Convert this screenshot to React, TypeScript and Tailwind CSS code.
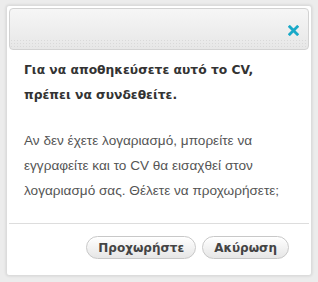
export default function App() {
  return (
    <div className="w-[318px] h-[282px] bg-[#ececec] pt-[5px] pl-[6px] font-['Liberation_Sans',Arial,sans-serif]">
      {/* Dialog */}
      <div className="w-[306px] h-[271px] bg-white border border-[#dcdcdc] rounded-[3px] shadow-[0_0_3px_rgba(0,0,0,0.12)] p-[2px] flex flex-col">
        {/* Header */}
        <div className="relative h-[42px] rounded-[4px] border border-[#d2d2d2] bg-gradient-to-b from-[#f6f6f6] to-[#e7e7e7] overflow-hidden">
          <div className="absolute left-0 right-0 bottom-0 h-[10px] bg-[radial-gradient(#d9d9d9_0.8px,transparent_0.9px)] bg-[length:3px_3px]" />
          <button className="absolute right-[9px] top-[16px] w-[11px] h-[11px]">
            <svg viewBox="0 0 11 11" className="w-[11px] h-[11px]">
              <path d="M1.8 1.8 L9.2 9.2 M9.2 1.8 L1.8 9.2" stroke="#19a9c8" strokeWidth="2.8" strokeLinecap="square" />
            </svg>
          </button>
        </div>

        {/* Body */}
        <div className="px-[15px] pt-[8px] flex-1">
          <p className="font-['DejaVu_Sans',Verdana,sans-serif] font-bold text-[12.3px] leading-[25px] text-[#333]">
            Για να αποθηκεύσετε αυτό το CV, πρέπει να συνδεθείτε.
          </p>
          <p className="mt-[20px] text-[13.6px] leading-[25px] text-[#555]">
            Αν δεν έχετε λογαριασμό, μπορείτε να εγγραφείτε και το CV θα εισαχθεί στον λογαριασμό σας. Θέλετε να προχωρήσετε;
          </p>
        </div>

        {/* Footer */}
        <div className="border-t border-[#dddddd] h-[50px] flex items-start justify-end gap-[6px] pt-[12px] pr-[20px]">
          <button className="h-[23px] px-[11px] rounded-full border border-[#c8c8c8] bg-gradient-to-b from-white to-[#e6e6e6] font-['DejaVu_Sans',Verdana,sans-serif] font-bold text-[12px] text-[#444] shadow-[inset_0_1px_0_#fff]">
            Προχωρήστε
          </button>
          <button className="h-[23px] px-[11px] rounded-full border border-[#c8c8c8] bg-gradient-to-b from-white to-[#e6e6e6] font-['DejaVu_Sans',Verdana,sans-serif] font-bold text-[12px] text-[#444] shadow-[inset_0_1px_0_#fff]">
            Ακύρωση
          </button>
        </div>
      </div>
    </div>
  );
}
